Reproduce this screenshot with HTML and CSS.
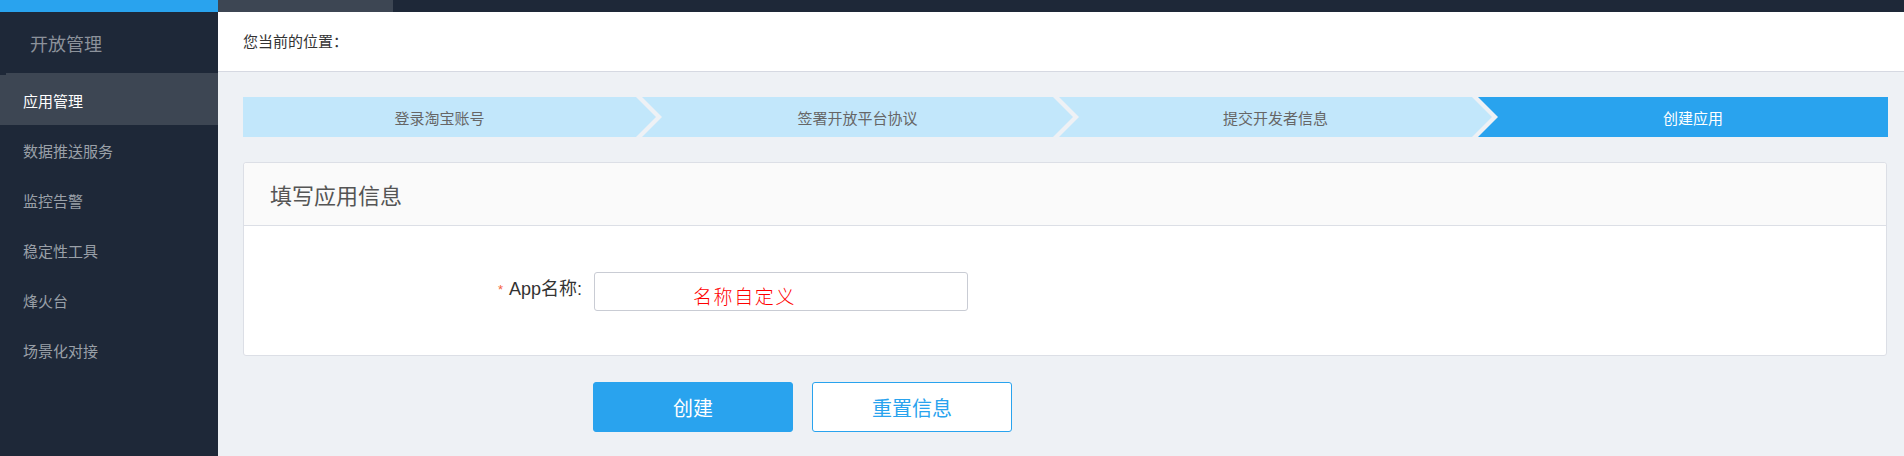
FILE: index.html
```html
<!DOCTYPE html>
<html lang="zh-CN">
<head>
<meta charset="utf-8">
<title>开放管理 - 创建应用</title>
<link rel="stylesheet" href="styles.css">
</head>
<body>
<div class="topbar">
  <div class="topbar-brand"></div>
  <div class="topbar-tab"></div>
</div>
<div class="layout">
  <aside class="sidebar">
    <div class="sidebar-title">开放管理</div>
    <div class="sidebar-sep"></div>
    <ul class="menu">
      <li class="menu-item active">应用管理</li>
      <li class="menu-item">数据推送服务</li>
      <li class="menu-item">监控告警</li>
      <li class="menu-item">稳定性工具</li>
      <li class="menu-item">烽火台</li>
      <li class="menu-item">场景化对接</li>
    </ul>
  </aside>
  <main class="main">
    <div class="crumb">您当前的位置：</div>
    <div class="content">
      <ol class="steps">
        <li class="step step-1">登录淘宝账号</li>
        <li class="step step-2">签署开放平台协议</li>
        <li class="step step-3">提交开发者信息</li>
        <li class="step step-4 current">创建应用</li>
      </ol>
      <section class="panel">
        <div class="panel-head">填写应用信息</div>
        <div class="panel-body">
          <div class="field">
            <label class="field-label"><span class="req">*</span>App名称:</label>
            <div class="field-input"><span class="hint">名称自定义</span></div>
          </div>
        </div>
      </section>
      <div class="actions">
        <button class="btn btn-primary">创建</button>
        <button class="btn btn-outline">重置信息</button>
      </div>
    </div>
  </main>
</div>
</body>
</html>
```
FILE: styles.css
```css
* { box-sizing: border-box; }
html, body { margin: 0; padding: 0; }
body {
  font-family: "Liberation Sans", "Noto Sans CJK SC", sans-serif;
  background: #eef1f5;
  height: 456px;
  overflow: hidden;
  display: flex;
  flex-direction: column;
}
.topbar {
  height: 12px;
  background: #1e2838;
  display: flex;
  flex: none;
}
.topbar-brand { width: 218px; background: #29a3ee; }
.topbar-tab { width: 175px; background: #3d4653; }

.layout { flex: 1; display: flex; min-height: 0; }

.sidebar {
  width: 218px;
  flex: none;
  background: #1e2838;
}
.sidebar-title {
  height: 61px;
  padding-left: 30px;
  display: flex;
  align-items: center;
  font-size: 18px;
  color: #8c929b;
}
.sidebar-sep {
  height: 2px;
  margin-left: 6px;
  background: #3d4653;
}
.menu { list-style: none; margin: 0; padding: 0; }
.menu-item {
  height: 50px;
  display: flex;
  align-items: center;
  padding-left: 23px;
  font-size: 15px;
  color: #9aa0a8;
}
.menu-item.active { background: #3d4653; color: #fff; }

.main { flex: 1; display: flex; flex-direction: column; min-width: 0; }
.crumb {
  height: 60px;
  background: #fff;
  border-bottom: 1px solid #d6d9e2;
  padding: 0 0 2px 25px;
  display: flex;
  align-items: center;
  font-family: "Liberation Sans", "Noto Sans CJK JP", sans-serif;
  font-size: 15px;
  color: #333;
}
.content { padding: 25px 16px 0 25px; }

.steps {
  list-style: none;
  margin: 0;
  padding: 0;
  display: flex;
  height: 40px;
}
.step {
  height: 40px;
  background: #c2e7fb;
  color: #666;
  font-size: 15px;
  display: flex;
  align-items: center;
  justify-content: center;
  margin-left: -14px;
  padding: 0 20px;
  clip-path: polygon(0 0, calc(100% - 20px) 0, 100% 50%, calc(100% - 20px) 100%, 0 100%, 20px 50%);
}
.step-1 {
  flex: 1 1 413px;
  margin-left: 0;
  padding-left: 0;
  clip-path: polygon(0 0, calc(100% - 20px) 0, 100% 50%, calc(100% - 20px) 100%, 0 100%);
}
.step-2 { flex: 1 1 431px; }
.step-3 { flex: 1 1 433px; }
.step-4 {
  flex: 1 1 410px;
  padding-right: 0;
  clip-path: polygon(0 0, 100% 0, 100% 100%, 0 100%, 20px 50%);
}
.step.current { background: #29a3ee; color: #fff; }

.panel {
  margin-top: 25px;
  background: #fff;
  border: 1px solid #dcdfe6;
  border-radius: 3px;
  margin-right: 1px;
}
.panel-head {
  height: 63px;
  background: #fafafa;
  border-bottom: 1px solid #dcdfe6;
  border-radius: 3px 3px 0 0;
  padding-left: 26px;
  display: flex;
  align-items: center;
  font-size: 22px;
  color: #555;
}
.panel-body {
  height: 129px;
  display: flex;
  align-items: center;
  padding-top: 2px;
}
.field { display: flex; align-items: center; }
.field-label {
  width: 350px;
  padding-right: 12px;
  text-align: right;
  font-size: 18px;
  color: #333;
  margin-top: -10px;
}
.req {
  color: #f5633a;
  font-size: 13px;
  margin-right: 6px;
  position: relative;
  top: -1px;
}
.field-input {
  width: 374px;
  height: 39px;
  border: 1px solid #c9ccd4;
  border-radius: 3px;
  padding: 12px 0 0 98px;
}
.hint {
  display: block;
  font-family: "Noto Sans CJK SC", sans-serif;
  font-weight: 300;
  font-size: 19px;
  line-height: 22px;
  letter-spacing: 1.6px;
  color: #ff0000;
}

.actions {
  margin-top: 26px;
  padding-left: 350px;
  display: flex;
  gap: 19px;
}
.btn {
  width: 200px;
  height: 50px;
  border-radius: 3px;
  font-family: "Liberation Sans", "Noto Sans CJK SC", sans-serif;
  font-size: 20px;
  cursor: pointer;
}
.btn-primary { background: #29a3ee; border: 1px solid #29a3ee; color: #fff; }
.btn-outline { background: #fff; border: 1px solid #29a3ee; color: #29a3ee; }
```
